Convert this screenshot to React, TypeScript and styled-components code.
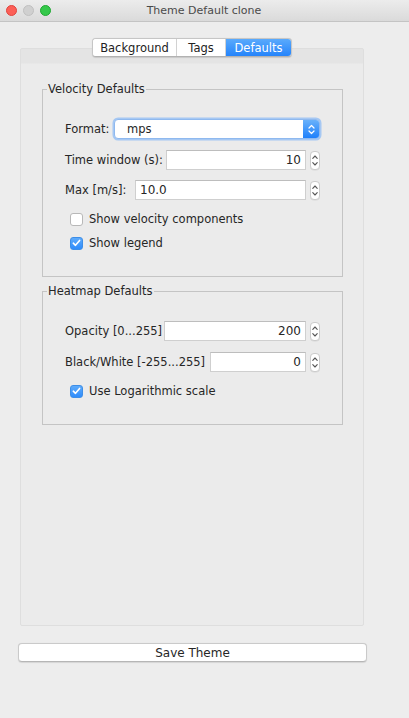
import React from "react";
import styled, { createGlobalStyle } from "styled-components";

const Global = createGlobalStyle`
  html, body { margin: 0; padding: 0; background: #ededed; }
  body { font-family: "DejaVu Sans", "Noto Sans", sans-serif; font-size: 11.5px; color: #262626; }
  * { box-sizing: border-box; }
`;

const Window = styled.div`
  width: 409px;
  height: 718px;
  display: flex;
  flex-direction: column;
  background: #ededed;
`;

const TitleBar = styled.div`
  height: 22px;
  flex: none;
  display: flex;
  align-items: center;
  padding-left: 6px;
  background: linear-gradient(#ececec, #dadada);
  border-bottom: 1px solid #c4c4c4;
`;

const Lights = styled.div`
  display: flex;
  gap: 6px;
`;

const Light = styled.span<{ $c: string; $b: string }>`
  width: 11px;
  height: 11px;
  border-radius: 50%;
  background: ${(p) => p.$c};
  border: 0.5px solid ${(p) => p.$b};
`;

const Title = styled.div`
  flex: 1;
  text-align: center;
  margin-right: 52px;
  font-size: 11px;
  color: #4a4a4a;
`;

const Body = styled.div`
  flex: 1;
  display: flex;
  flex-direction: column;
  padding: 16px 0 0 18px;
`;

const TabArea = styled.div`
  width: 346px;
  padding-left: 2px;
  display: flex;
  flex-direction: column;
`;

const TabBar = styled.div`
  display: flex;
  justify-content: center;
  margin-bottom: -9px;
  position: relative;
  z-index: 1;
`;

const Segments = styled.div`
  display: flex;
  height: 19px;
  border-radius: 4px;
  border: 1px solid #c6c6c6;
  border-bottom-color: #b2b2b2;
  background: #ffffff;
  box-shadow: 0 0.5px 1px rgba(0, 0, 0, 0.12);
  overflow: hidden;
`;

const Tab = styled.div<{ $active?: boolean; $w: number }>`
  width: ${(p) => p.$w}px;
  display: flex;
  align-items: center;
  justify-content: center;
  font-size: 11.5px;
  color: ${(p) => (p.$active ? "#ffffff" : "#222222")};
  background: ${(p) => (p.$active ? "linear-gradient(#5aaafc, #2584fb)" : "#ffffff")};
  & + & {
    border-left: 1px solid #d2d2d2;
  }
`;

const Pane = styled.div`
  width: 344px;
  height: 578px;
  border: 1px solid #dedede;
  border-radius: 2px;
  background: linear-gradient(#e4e4e4 0, #e4e4e4 14px, #ebebeb 15px, #ebebeb 100%);
  padding: 32px 20px 0 21px;
  display: flex;
  flex-direction: column;
  gap: 6px;
`;

const Group = styled.fieldset`
  margin: 0;
  min-width: 0;
  padding: 0;
  border: 1px solid #c4c4c4;
`;

const GroupTitle = styled.legend`
  margin-left: 4px;
  padding: 0 1px;
  line-height: 16px;
  font-size: 11.5px;
  color: #262626;
`;

const GroupBody = styled.div`
  display: flex;
  flex-direction: column;
  padding: 22px 22px 24px 22px;
`;

const Row = styled.div<{ $gap?: number }>`
  display: flex;
  align-items: center;
  height: 20px;
  margin-top: ${(p) => p.$gap ?? 0}px;
`;

const Label = styled.span<{ $w: number }>`
  width: ${(p) => p.$w}px;
  flex: none;
  white-space: nowrap;
`;

const Select = styled.div`
  flex: 1;
  height: 20px;
  display: flex;
  align-items: center;
  background: #ffffff;
  border: 1px solid #8fb9ef;
  border-radius: 4px;
  box-shadow: 0 0 0 1.5px #a6c8f3;
  overflow: hidden;
`;

const SelectText = styled.span`
  flex: 1;
  padding-left: 12px;
`;

const SelectArrow = styled.span`
  width: 16px;
  height: 100%;
  display: flex;
  align-items: center;
  justify-content: center;
  background: linear-gradient(#69b1fa, #1e80fb);
`;

const Field = styled.div<{ $right?: boolean }>`
  flex: 1;
  height: 20px;
  display: flex;
  align-items: center;
  justify-content: ${(p) => (p.$right ? "flex-end" : "flex-start")};
  padding: 0 4px;
  background: #ffffff;
  border: 1px solid #cfcfcf;
  border-top-color: #bdbdbd;
  font-size: 12px;
`;

const Spinner = styled.div`
  width: 10px;
  height: 19px;
  margin-left: 4px;
  flex: none;
  display: flex;
  flex-direction: column;
  align-items: center;
  justify-content: space-between;
  padding: 3px 0;
  background: #ffffff;
  border: 1px solid #cccccc;
  border-radius: 4px;
  box-shadow: 0 0.5px 0.5px rgba(0, 0, 0, 0.08);
`;

const CheckRow = styled.label<{ $gap: number }>`
  display: flex;
  align-items: center;
  gap: 6px;
  height: 18px;
  padding-left: 5px;
  margin-top: ${(p) => p.$gap}px;
`;

const Box = styled.span<{ $on?: boolean }>`
  width: 13px;
  height: 13px;
  border-radius: 3px;
  display: flex;
  align-items: center;
  justify-content: center;
  background: ${(p) => (p.$on ? "linear-gradient(#5eabfb, #2f8cfb)" : "#ffffff")};
  border: 1px solid ${(p) => (p.$on ? "#3d8ee8" : "#b8b8b8")};
`;

const Footer = styled.div`
  margin-top: 17px;
  width: 349px;
`;

const Button = styled.button`
  width: 100%;
  height: 19px;
  padding: 0;
  border: 1px solid #cacaca;
  border-bottom-color: #b6b6b6;
  border-radius: 4px;
  background: #ffffff;
  box-shadow: 0 0.5px 1px rgba(0, 0, 0, 0.1);
  font-family: inherit;
  font-size: 12px;
  color: #262626;
`;

const Chev = ({ up, color }: { up?: boolean; color: string }) => (
  <svg width="6" height="4" viewBox="0 0 6 4">
    <path
      d={up ? "M0.8 3.3 L3 1 L5.2 3.3" : "M0.8 0.7 L3 3 L5.2 0.7"}
      fill="none"
      stroke={color}
      strokeWidth="1.1"
      strokeLinecap="round"
      strokeLinejoin="round"
    />
  </svg>
);

const Spin = () => (
  <Spinner>
    <Chev up color="#555" />
    <Chev color="#555" />
  </Spinner>
);

const Check = ({ on, text, gap }: { on?: boolean; text: string; gap: number }) => (
  <CheckRow $gap={gap}>
    <Box $on={on}>
      {on && (
        <svg width="9" height="8" viewBox="0 0 9 8">
          <path d="M1.3 4.2 L3.5 6.3 L7.6 1.4" fill="none" stroke="#fff" strokeWidth="1.6" strokeLinecap="round" strokeLinejoin="round" />
        </svg>
      )}
    </Box>
    <span>{text}</span>
  </CheckRow>
);

export default function App() {
  return (
    <>
      <Global />
      <Window>
        <TitleBar>
          <Lights>
            <Light $c="#fc5f57" $b="#e0443e" />
            <Light $c="#d0d0d0" $b="#c0c0c0" />
            <Light $c="#34c84a" $b="#1fa832" />
          </Lights>
          <Title>Theme Default clone</Title>
        </TitleBar>
        <Body>
          <TabArea>
            <TabBar>
              <Segments>
                <Tab $w={83}>Background</Tab>
                <Tab $w={49}>Tags</Tab>
                <Tab $w={66} $active>
                  Defaults
                </Tab>
              </Segments>
            </TabBar>
            <Pane>
              <Group>
                <GroupTitle>Velocity Defaults</GroupTitle>
                <GroupBody>
                  <Row>
                    <Label $w={49}>Format:</Label>
                    <Select>
                      <SelectText>mps</SelectText>
                      <SelectArrow>
                        <svg width="7" height="11" viewBox="0 0 7 11">
                          <path d="M1 4 L3.5 1.5 L6 4 M1 7 L3.5 9.5 L6 7" fill="none" stroke="#fff" strokeWidth="1.2" strokeLinecap="round" strokeLinejoin="round" />
                        </svg>
                      </SelectArrow>
                    </Select>
                  </Row>
                  <Row $gap={11}>
                    <Label $w={101}>Time window (s):</Label>
                    <Field $right>10</Field>
                    <Spin />
                  </Row>
                  <Row $gap={10}>
                    <Label $w={70}>Max [m/s]:</Label>
                    <Field>10.0</Field>
                    <Spin />
                  </Row>
                  <Check text="Show velocity components" gap={10} />
                  <Check on text="Show legend" gap={6} />
                </GroupBody>
              </Group>
              <Group>
                <GroupTitle>Heatmap Defaults</GroupTitle>
                <GroupBody>
                  <Row>
                    <Label $w={99}>Opacity [0...255]</Label>
                    <Field $right>200</Field>
                    <Spin />
                  </Row>
                  <Row $gap={11}>
                    <Label $w={145}>Black/White [-255...255]</Label>
                    <Field $right>0</Field>
                    <Spin />
                  </Row>
                  <Check on text="Use Logarithmic scale" gap={10} />
                </GroupBody>
              </Group>
            </Pane>
          </TabArea>
          <Footer>
            <Button>Save Theme</Button>
          </Footer>
        </Body>
      </Window>
    </>
  );
}
